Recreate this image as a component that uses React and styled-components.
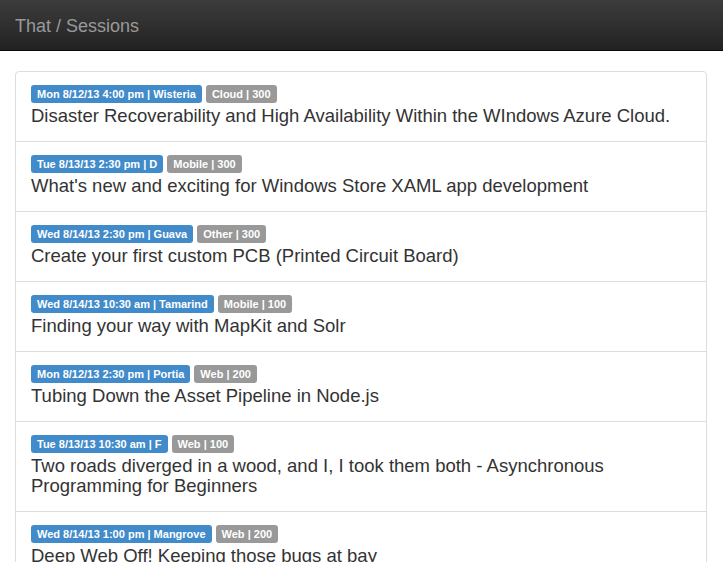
import React from 'react'
import styled, { createGlobalStyle } from 'styled-components'

const GlobalStyle = createGlobalStyle`
  html, body {
    margin: 0;
    padding: 0;
    background: #ffffff;
    font-family: "Liberation Sans", Arial, sans-serif;
    color: #333333;
  }
`

const Navbar = styled.header`
  height: 51px;
  display: flex;
  align-items: center;
  padding: 0 15px;
  background: linear-gradient(to bottom, #3c3c3c 0%, #222222 100%);
  border-bottom: 1px solid #080808;
  box-sizing: border-box;
`

const Brand = styled.span`
  font-size: 18px;
  color: #999999;
  line-height: 20px;
  padding-top: 2px;
`

const Page = styled.main`
  padding: 20px 16px 0 15px;
`

const Panel = styled.ul`
  list-style: none;
  margin: 0;
  padding: 0;
  border: 1px solid #dddddd;
  border-radius: 4px;
`

const Item = styled.li`
  padding: 13px 15px 15px;
  border-top: 1px solid #dddddd;

  &:first-child {
    border-top: none;
  }
`

const Tags = styled.div`
  display: flex;
  gap: 4px;
`

const Tag = styled.span`
  display: inline-block;
  height: 18px;
  line-height: 18px;
  padding: 0 6px;
  border-radius: 3px;
  font-size: 11px;
  font-weight: bold;
  color: #ffffff;
  background: ${(p) => (p.$kind === 'when' ? '#428bca' : '#999999')};
`

const Title = styled.h4`
  margin: 3px 0 0;
  font-size: 18.5px;
  line-height: 20px;
  font-weight: normal;
  color: #333333;
`

const sessions = [
  {
    when: 'Mon 8/12/13 4:00 pm | Wisteria',
    track: 'Cloud | 300',
    title: 'Disaster Recoverability and High Availability Within the WIndows Azure Cloud.',
  },
  {
    when: 'Tue 8/13/13 2:30 pm | D',
    track: 'Mobile | 300',
    title: "What's new and exciting for Windows Store XAML app development",
  },
  {
    when: 'Wed 8/14/13 2:30 pm | Guava',
    track: 'Other | 300',
    title: 'Create your first custom PCB (Printed Circuit Board)',
  },
  {
    when: 'Wed 8/14/13 10:30 am | Tamarind',
    track: 'Mobile | 100',
    title: 'Finding your way with MapKit and Solr',
  },
  {
    when: 'Mon 8/12/13 2:30 pm | Portia',
    track: 'Web | 200',
    title: 'Tubing Down the Asset Pipeline in Node.js',
  },
  {
    when: 'Tue 8/13/13 10:30 am | F',
    track: 'Web | 100',
    title: 'Two roads diverged in a wood, and I, I took them both - Asynchronous Programming for Beginners',
  },
  {
    when: 'Wed 8/14/13 1:00 pm | Mangrove',
    track: 'Web | 200',
    title: 'Deep Web Off! Keeping those bugs at bay',
  },
]

export default function App() {
  return (
    <>
      <GlobalStyle />
      <Navbar>
        <Brand>That / Sessions</Brand>
      </Navbar>
      <Page>
        <Panel>
          {sessions.map((s) => (
            <Item key={s.title}>
              <Tags>
                <Tag $kind="when">{s.when}</Tag>
                <Tag>{s.track}</Tag>
              </Tags>
              <Title>{s.title}</Title>
            </Item>
          ))}
        </Panel>
      </Page>
    </>
  )
}
